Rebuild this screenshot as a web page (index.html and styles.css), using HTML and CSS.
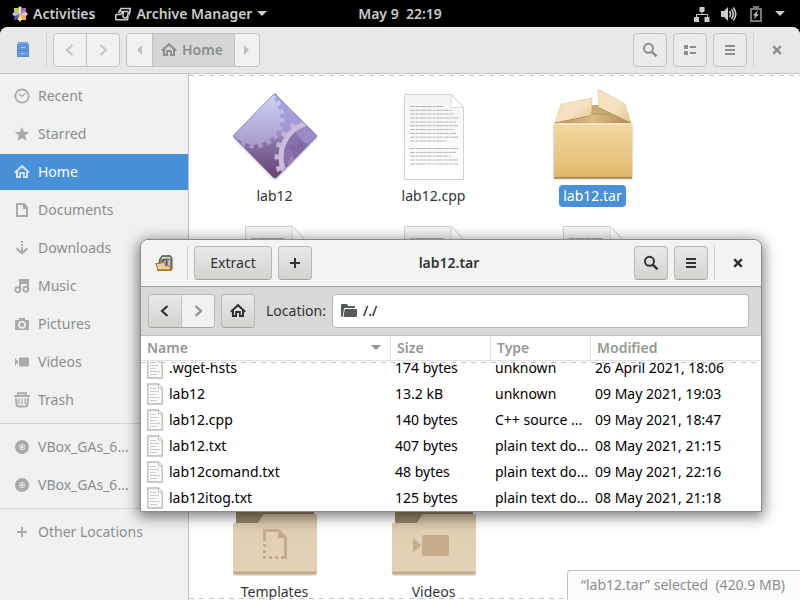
FILE: index.html
```
<!DOCTYPE html>
<html lang="en">
<head>
<meta charset="utf-8">
<title>Archive Manager</title>
<link rel="stylesheet" href="styles.css">
</head>
<body>
<svg class="defs" aria-hidden="true">
  <defs>
    <linearGradient id="gDiamond" x1="0" y1="0" x2="0" y2="1"><stop offset="0" stop-color="#c4c8f6"/><stop offset=".45" stop-color="#a294ca"/><stop offset=".6" stop-color="#846fa2"/><stop offset="1" stop-color="#673d68"/></linearGradient>
    <linearGradient id="gGear" gradientUnits="userSpaceOnUse" x1="0" y1="0" x2="0" y2="58"><stop offset="0" stop-color="#d0d6fb"/><stop offset="1" stop-color="#a597c8"/></linearGradient>
    <linearGradient id="gBox" x1="0" y1="0" x2="0" y2="1"><stop offset="0" stop-color="#f3d8a2"/><stop offset=".8" stop-color="#e5c079"/><stop offset="1" stop-color="#deb365"/></linearGradient>
    <linearGradient id="gFlap" x1="0" y1="0" x2="1" y2="1"><stop offset="0" stop-color="#f2dfbd"/><stop offset=".5" stop-color="#f5e2c3"/><stop offset="1" stop-color="#e5c68d"/></linearGradient>
    <linearGradient id="gInside" x1="0" y1="0" x2="1" y2="0"><stop offset="0" stop-color="#b09462"/><stop offset=".5" stop-color="#d9bc83"/><stop offset="1" stop-color="#a88a55"/></linearGradient>
    <linearGradient id="gFolder" x1="0" y1="0" x2="0" y2="1"><stop offset="0" stop-color="#d6c2a6"/><stop offset=".3" stop-color="#e1cfb3"/><stop offset="1" stop-color="#e4d2b8"/></linearGradient>
    <linearGradient id="gPaper" x1="0" y1="0" x2="0" y2="1"><stop offset="0" stop-color="#f4f4f3"/><stop offset="1" stop-color="#ffffff"/></linearGradient>
    <filter id="soft" x="-10%" y="-10%" width="120%" height="120%"><feDropShadow dx="0" dy="1" stdDeviation="1" flood-opacity=".35"/></filter>
    <clipPath id="diamondClip"><path d="M43 3 84 44Q85 45 84 46L45 86Q43 88 41 86L2 46Q1 45 2 44L41 4Q43 2 45 4Z"/></clipPath>
  </defs>
  <symbol id="home" viewBox="0 0 16 16"><path fill="none" stroke="currentColor" stroke-width="2" d="M.8 8.700 8 2.200l7.200 6.500"/><path fill="currentColor" d="M2 8v6h5v-4h2v4h5V8l-2-1.700V12h-1.200V8H5.200v4H4V6.300z"/></symbol>
  <symbol id="back" viewBox="0 0 16 16"><path fill="none" stroke="currentColor" stroke-width="2.200" d="M10.500 3 5 8l5.500 5"/></symbol>
  <symbol id="fwd" viewBox="0 0 16 16"><path fill="none" stroke="currentColor" stroke-width="2.200" d="M5.500 3 11 8l-5.500 5"/></symbol>
  <symbol id="search" viewBox="0 0 16 16"><circle cx="6.500" cy="6.300" r="4.500" fill="none" stroke="currentColor" stroke-width="2"/><path stroke="currentColor" stroke-width="2.400" d="m9.800 9.600 4.700 4.700"/></symbol>
  <symbol id="menu" viewBox="0 0 16 16"><path fill="currentColor" d="M3 3h10v2H3zM3 7h10v2H3zM3 11h10v2H3z"/></symbol>
  <symbol id="views" viewBox="0 0 16 16"><path fill="currentColor" d="M2 3h4v4H2zM8 4h6v2H8zM2 9h4v4H2zM8 10h6v2H8z"/></symbol>
  <symbol id="close" viewBox="0 0 16 16"><path stroke="currentColor" stroke-width="2.400" d="m4.200 4.200 7.600 7.600M11.800 4.200l-7.600 7.600"/></symbol>
  <symbol id="plus" viewBox="0 0 16 16"><path fill="currentColor" d="M7 3h2v4h4v2H9v4H7V9H3V7h4z"/></symbol>
  <symbol id="down" viewBox="0 0 10 6"><path fill="currentColor" d="M0 0h10L5 5z"/></symbol>
  <symbol id="recent" viewBox="0 0 16 16"><circle cx="8" cy="8" r="6.700" fill="none" stroke="currentColor" stroke-width="1.800"/><path fill="none" stroke="currentColor" stroke-width="1.200" d="m4.800 5.800 3 2.700L11.800 5"/></symbol>
  <symbol id="star" viewBox="0 0 16 16"><path fill="currentColor" d="m8 1 2 4.800 5.200.4-4 3.400 1.300 5.200L8 12l-4.500 2.800 1.300-5.200-4-3.400L6 5.800z"/></symbol>
  <symbol id="doc" viewBox="0 0 16 16"><path fill="none" stroke="currentColor" stroke-width="2" d="M3 2h7l3 3.500V14H3z"/><path fill="currentColor" d="M9 2v5h5V5l-4-4z"/></symbol>
  <symbol id="download" viewBox="0 0 16 16"><path fill="currentColor" d="M7 1h2v2H7zM7 4h2v2H7zM7 7h2v5H7z"/><path fill="none" stroke="currentColor" stroke-width="2.200" d="m2.500 8.300 5.500 5 5.500-5"/></symbol>
  <symbol id="music" viewBox="0 0 16 16"><path fill="currentColor" d="M5 1h10v11h-2V6H7v7H5z"/><circle cx="3.800" cy="11.800" r="2.500" fill="none" stroke="currentColor" stroke-width="1.900"/><circle cx="11.800" cy="11.300" r="2.500" fill="none" stroke="currentColor" stroke-width="1.900"/></symbol>
  <symbol id="camera" viewBox="0 0 16 16"><path fill="currentColor" fill-rule="evenodd" d="M5 2h6v2h3q1 0 1 1v8q0 1-1 1H2q-1 0-1-1V5q0-1 1-1h3zM8 4.800a4 4 0 1 0 .01 0zM8 6.500a2.300 2.300 0 1 1-.01 0z"/></symbol>
  <symbol id="video" viewBox="0 0 16 16"><path fill="currentColor" d="M1 4l3.500 4L1 12zM6 3.500h8q1 0 1 1v7q0 1-1 1H6q-1 0-1-1v-7q0-1 1-1z"/></symbol>
  <symbol id="trash" viewBox="0 0 16 16"><path fill="none" stroke="currentColor" stroke-width="2" d="M4 3V1.200h8V3M0 4h16M2 6l.7 7q.2 1.500 1.500 1.500h7.600q1.300 0 1.500-1.500L14 6"/><path fill="none" stroke="currentColor" stroke-width="1.300" d="M5 6.300q-.7 3 .2 6M8 6.300v6M11 6.300q.7 3-.2 6"/></symbol>
  <symbol id="disc" viewBox="0 0 16 16"><circle cx="8" cy="8" r="5" fill="none" stroke="currentColor" stroke-width="4"/><circle cx="8" cy="8" r="2" fill="none" stroke="currentColor"/></symbol>
  <symbol id="paper" viewBox="0 0 60 86">
    <path filter="url(#soft)" fill="url(#gPaper)" stroke="#d2d2d0" d="M.5.500h46.500l12.500 13v72H.5z"/>
    <path fill="#fff" stroke="#d0d0ce" stroke-width=".7" d="M47 .5v13h12.500z"/>
    <path stroke="#888" stroke-width="1" stroke-dasharray="5 .7 3 .5 7 .6" opacity=".6" d="M6 12.500h34M6 16.300h42M6 20h44M6 24h48M6 28h46M6 31.800h48M6 35.600h44M6 39.400h46M6 43.200h48M6 47h36M6 54.500h48M6 58.400h46M6 62.200h41M6 66h48M6 70h48"/>
  </symbol>
  <symbol id="rowdoc" viewBox="0 0 16 22"><path fill="#fafaf9" stroke="#b9bab5" stroke-width="1.300" d="M.8 1h10.700L15.200 5v16H.8z"/><path fill="#fff" stroke="#b9bab5" d="M11.500 1v4h3.700"/><path stroke="#cbccc9" d="M3 5.500h6M3 8.500h9M3 11.500h6M3 14.500h10M3 17.500h7"/></symbol>
  <symbol id="folder" viewBox="0 0 84 66">
    <path fill="#98886a" d="M3 0h78v14H3z"/>
    <path filter="url(#soft)" fill="url(#gFolder)" d="M0 15q0-2 2-2h23l5-8q1-1 2-1h50q2 0 2 2v56q0 2-2 2H2q-2 0-2-2z"/>
    <path fill="#c6a881" d="M0 61.500h84q0 2.500-2 2.500H2q-2 0-2-2.500z"/>
  </symbol>
</svg>

<header class="topbar">
  <button class="top-item">
    <svg class="i16" viewBox="0 0 16 16"><path fill="#dfe7a5" d="m8 0 2.500 2.500v3L8 8 5.500 5.500v-3z"/><path fill="#a9cf55" d="M2 2h5v5H2z"/><path fill="#a45bab" d="M9 2h5v5H9z"/><path fill="#3d3b88" d="M2 9h5v5H2z"/><path fill="#e9a63a" d="M9 9h5v5H9z"/><path fill="#eedb88" d="m8 16-2.500-3L8 8l2.500 5z"/><path fill="#c9a2d4" d="m0 8 2.500-2.500L8 8l-5.500 2.500z"/><path fill="#d8b9dd" d="m16 8-2.500-2.500L8 8l5.500 2.500z"/><path stroke="#fff" stroke-width=".4" d="M8 1v14M1 8h14M3 3l10 10M13 3 3 13"/></svg>
    Activities
  </button>
  <button class="top-item app">
    <svg class="i16" viewBox="0 0 16 16"><path fill="none" stroke="currentColor" stroke-width="1.600" d="M3.500 7 6 2.500h9.500L14 9M1 8.500h4.500L7 7h2M.8 8.500V13q0 .8.800.8H13M4.500 5.500h9"/><path fill="none" stroke="currentColor" stroke-width="1.500" d="M8.500 5.500 8 9.500q0 2.500 2 2.500t2.500-2L13.500 6M13 9.500l-.3 4.300"/></svg>
    Archive Manager
    <svg class="arrow" viewBox="0 0 10 6"><use href="#down"/></svg>
  </button>
  <time class="clock">May 9&nbsp; 22:19</time>
  <button class="top-item tray" aria-label="System">
    <svg class="i16" viewBox="0 0 16 16"><path fill="currentColor" d="M5.500 1h5v5h-5zM0 11h5v5H0zM10.500 11h5v5h-5z"/><path fill="none" stroke="currentColor" d="M8 5v3.500M2.500 11V8.500h11V11"/></svg>
    <svg class="i16" viewBox="0 0 16 16"><path fill="currentColor" d="M0 5h3l4-4v14l-4-4H0z"/><path fill="none" stroke="currentColor" stroke-width="1.600" d="M8.500 5q2 3 0 6M10.500 3.200q3.500 4.800 0 9.600M12.300 1.500q5 6.500 0 13"/></svg>
    <svg class="i16" viewBox="0 0 16 16"><path fill="none" stroke="#777" stroke-width="2" d="M3 3h10v12H3z"/><path fill="#777" d="M5 0h6v3H5z"/><path fill="currentColor" d="M10 4 5 9.500h2.500L5.500 13.500 11 8.200H8.500z"/></svg>
    <svg class="arrow" viewBox="0 0 10 6"><use href="#down"/></svg>
  </button>
</header>

<main class="files">
  <header class="files-bar">
    <svg class="cabinet" viewBox="0 0 12 16"><path fill="#5b8fd4" d="M1 1h10l1 2v12H0V3z"/><path fill="#77a8e4" d="M1 0h10v2H1z"/><path fill="#6199dd" d="M1 3h10v5H1zM1 9h10v5H1z"/><path fill="#a8cbf2" d="M4 5h4v1H4zM4 11h4v1H4z"/><path fill="#4a80c6" d="M0 8h12v1H0z"/></svg>
    <span class="divider"></span>
    <div class="group nav">
      <button aria-label="Back"><svg class="i16"><use href="#back"/></svg></button>
      <button aria-label="Forward"><svg class="i16"><use href="#fwd"/></svg></button>
    </div>
    <div class="group path">
      <button aria-label="Scroll left"><svg class="tri" viewBox="0 0 5 10"><path fill="currentColor" d="M5 0v10L0 5z"/></svg></button>
      <button class="crumb"><svg class="i16"><use href="#home"/></svg>Home</button>
      <button aria-label="Scroll right"><svg class="tri" viewBox="0 0 5 10"><path fill="currentColor" d="M0 0v10l5-5z"/></svg></button>
    </div>
    <span class="grow"></span>
    <button class="btn" aria-label="Search"><svg class="i16"><use href="#search"/></svg></button>
    <button class="btn" aria-label="View"><svg class="i16"><use href="#views"/></svg></button>
    <button class="btn" aria-label="Menu"><svg class="i16"><use href="#menu"/></svg></button>
    <span class="divider"></span>
    <button class="close" aria-label="Close"><svg class="i16"><use href="#close"/></svg></button>
  </header>

  <div class="files-body">
    <nav class="places">
      <a href="#"><svg class="i16"><use href="#recent"/></svg>Recent</a>
      <a href="#"><svg class="i16"><use href="#star"/></svg>Starred</a>
      <a href="#" class="current"><svg class="i16"><use href="#home"/></svg>Home</a>
      <a href="#"><svg class="i16"><use href="#doc"/></svg>Documents</a>
      <a href="#"><svg class="i16"><use href="#download"/></svg>Downloads</a>
      <a href="#"><svg class="i16"><use href="#music"/></svg>Music</a>
      <a href="#"><svg class="i16"><use href="#camera"/></svg>Pictures</a>
      <a href="#"><svg class="i16"><use href="#video"/></svg>Videos</a>
      <a href="#"><svg class="i16"><use href="#trash"/></svg>Trash</a>
      <hr>
      <a href="#"><svg class="i16"><use href="#disc"/></svg>VBox_GAs_6...</a>
      <a href="#"><svg class="i16"><use href="#disc"/></svg>VBox_GAs_6...</a>
      <hr>
      <a href="#"><svg class="i16"><use href="#plus"/></svg>Other Locations</a>
    </nav>

    <section class="icons">
      <figure>
        <svg class="pic exec" viewBox="0 0 86 90">
          <g filter="url(#soft)"><g clip-path="url(#diamondClip)">
            <path fill="url(#gDiamond)" d="M0 0h86v90H0z"/>
            <path fill="#a09adb" opacity=".8" d="M43 3 86 45 66 36 55 42 46 30z"/>
            <circle cx="22" cy="27" r="28" fill="none" stroke="url(#gGear)" stroke-width="5" stroke-dasharray="4.400 4.400"/>
            <circle cx="22" cy="27" r="26.500" fill="url(#gGear)"/>
            <circle cx="84" cy="66" r="33" fill="#8972ab"/>
            <path fill="#9b8aca" d="M63 40q10-8 23-6v22q-16-2-23-16z"/>
            <path fill="#a17fb4" d="M56 88q-2-14 2-22l8-2 6-5 14-2v31z"/>
            <path fill="#8168a4" d="m56 54 9 1 3-8 5 8 8 2-7 4-1 7-6-3-5 4-1-8z"/>
            <circle cx="84" cy="66" r="35" fill="none" stroke="#cdbddd" stroke-width="5"/>
            <circle cx="84" cy="66" r="39" fill="none" stroke="#c6b3d8" stroke-width="5" stroke-dasharray="5 7"/>
          </g></g>
          <path fill="none" stroke="#6f5f95" stroke-width=".8" opacity=".7" d="M43 3 84 44Q85 45 84 46L45 86Q43 88 41 86L2 46Q1 45 2 44L41 4Q43 2 45 4Z"/>
        </svg>
        <figcaption>lab12</figcaption>
      </figure>
      <figure>
        <svg class="pic paper"><use href="#paper"/></svg>
        <figcaption>lab12.cpp</figcaption>
      </figure>
      <figure class="selected">
        <svg class="pic box" viewBox="0 0 80 92">
          <path fill="url(#gInside)" d="M8 17h63l7 20H2z"/>
          <path fill="#c7a973" d="M37 17h14l6 9H37z"/>
          <path stroke="#b3945d" d="M36 26h22"/>
          <path filter="url(#soft)" fill="url(#gBox)" d="M1 35h78v54q0 1-1 1H2q-1 0-1-1z"/>
          <path fill="#f8e5bf" d="M1 35h78v2H1z"/>
          <path fill="#a98448" d="M1 89h78v1.500H1z"/>
          <path fill="url(#gFlap)" stroke="#e0c796" stroke-width=".6" d="M8 16 39 10l-1 18L2 35z"/>
          <path fill="none" stroke="#b79052" d="m2 35 35-7 1-1"/>
          <path fill="url(#gFlap)" stroke="#e0c796" stroke-width=".6" d="m45 1 27 15 6 19-32-15z"/>
          <path fill="none" stroke="#b79052" d="m46 20 32 15"/>
        </svg>
        <figcaption>lab12.tar</figcaption>
      </figure>
      <figure><svg class="pic paper"><use href="#paper"/></svg></figure>
      <figure><svg class="pic paper"><use href="#paper"/></svg></figure>
      <figure><svg class="pic paper"><use href="#paper"/></svg></figure>
      <figure class="last-row">
        <svg class="pic folder" viewBox="0 0 84 66"><use href="#folder" width="84" height="66"/><path fill="#c5ad8b" d="M30 19h16l8 8v22h-6v-3h3V28h-6v-6H33v9h-3zM30 34h3v3h-3zM30 40h3v3h-3zM30 46h3v3h-3zM36 46h3v3h-3zM42 46h3v3h-3z"/></svg>
        <figcaption>Templates</figcaption>
      </figure>
      <figure class="last-row">
        <svg class="pic folder" viewBox="0 0 84 66"><use href="#folder" width="84" height="66"/><path fill="#c5ad8b" d="m21 28 8 7.500-8 7.500zM32 25h23q2 0 2 2v17q0 2-2 2H32q-2 0-2-2V27q0-2 2-2z"/></svg>
        <figcaption>Videos</figcaption>
      </figure>
      <p class="status">“lab12.tar” selected&nbsp; (420.9 MB)</p>
    </section>
  </div>
</main>

<section class="archive" aria-label="lab12.tar">
  <header class="archive-bar">
    <svg class="roller" viewBox="0 0 18 16"><path fill="#8b8c84" stroke="#4c4d48" d="M5 3.500 7 .8h8.500L17 3v11H8L4 8z"/><path fill="none" stroke="#e4e4e0" stroke-width="1.300" d="M7 3h8M9.500 6v3.500M14 5v7"/><path fill="none" stroke="#4c4d48" d="M8 10.500V5q3.500-2 6 0M11.500 6v4"/><path fill="#e3d3a3" stroke="#a2762c" d="M.8 8.500h4.700L7 7.500h2.500l1 3.500h4l1.500 4H3z"/><path stroke="#b57411" stroke-width="1.500" d="M2 15.200h15"/></svg>
    <span class="divider"></span>
    <button class="btn extract">Extract</button>
    <button class="btn" aria-label="Add files"><svg class="i16"><use href="#plus"/></svg></button>
    <h1>lab12.tar</h1>
    <button class="btn" aria-label="Search"><svg class="i16"><use href="#search"/></svg></button>
    <button class="btn" aria-label="Menu"><svg class="i16"><use href="#menu"/></svg></button>
    <span class="divider"></span>
    <button class="close" aria-label="Close"><svg class="i16"><use href="#close"/></svg></button>
  </header>
  <div class="toolbar">
    <div class="group">
      <button aria-label="Back"><svg class="i16"><use href="#back"/></svg></button>
      <button aria-label="Forward" disabled><svg class="i16"><use href="#fwd"/></svg></button>
    </div>
    <button class="btn" aria-label="Home"><svg class="i16"><use href="#home"/></svg></button>
    <label for="location">Location:</label>
    <div class="entry">
      <svg class="i16" viewBox="0 0 16 16"><path fill="#555a5b" d="M0 2q0-1 1-1h5l1 2h6q1 0 1 1v1H4q-1 0-1 1L1.500 14Q0 14 0 13z"/><path fill="#555a5b" d="M4.500 6H15q1 0 1 1v6q0 1-1 1H2.500L3.600 7q.1-1 .9-1z"/></svg>
      <input id="location" type="text" value="/./">
    </div>
  </div>
  <table class="list">
    <thead>
      <tr><th>Name<svg class="arrow" viewBox="0 0 10 6"><use href="#down"/></svg></th><th>Size</th><th>Type</th><th>Modified</th></tr>
    </thead>
    <tbody>
      <tr><td><svg class="rowdoc"><use href="#rowdoc"/></svg>.wget-hsts</td><td>174 bytes</td><td>unknown</td><td>26 April 2021, 18:06</td></tr>
      <tr><td><svg class="rowdoc"><use href="#rowdoc"/></svg>lab12</td><td>13.2 kB</td><td>unknown</td><td>09 May 2021, 19:03</td></tr>
      <tr><td><svg class="rowdoc"><use href="#rowdoc"/></svg>lab12.cpp</td><td>140 bytes</td><td>C++ source ...</td><td>09 May 2021, 18:47</td></tr>
      <tr><td><svg class="rowdoc"><use href="#rowdoc"/></svg>lab12.txt</td><td>407 bytes</td><td>plain text do...</td><td>08 May 2021, 21:15</td></tr>
      <tr><td><svg class="rowdoc"><use href="#rowdoc"/></svg>lab12comand.txt</td><td>48 bytes</td><td>plain text do...</td><td>09 May 2021, 22:16</td></tr>
      <tr><td><svg class="rowdoc"><use href="#rowdoc"/></svg>lab12itog.txt</td><td>125 bytes</td><td>plain text do...</td><td>08 May 2021, 21:18</td></tr>
    </tbody>
  </table>
</section>
</body>
</html>
```
FILE: styles.css
```
* { box-sizing: border-box; }

body {
  margin: 0;
  height: 100vh;
  overflow: hidden;
  display: flex;
  flex-direction: column;
  background: #000;
  font: 14px/20px "Noto Sans", "Open Sans", sans-serif;
  color: #2e3436;
}

button, input {
  font: inherit;
  color: inherit;
  margin: 0;
  padding: 0;
  border: 0;
  background: none;
}

.defs { position: absolute; width: 0; height: 0; }
svg { flex: none; display: block; }
.i16 { width: 16px; height: 16px; }
.arrow { width: 10px; height: 6px; }
.grow { flex: 1; }

/* Top bar */
.topbar {
  flex: none;
  height: 27px;
  display: grid;
  grid-template-columns: auto auto 1fr auto;
  align-items: center;
  padding: 0 15px 0 12px;
  color: #ccc;
  font-weight: 600;
  position: relative;
}
.top-item { display: flex; align-items: center; gap: 5px; }
.app { margin-left: 20px; }
.tray { grid-column: 4; gap: 11px; }
.clock { position: absolute; left: 50%; transform: translateX(-50%); }

/* File browser */
.files {
  flex: 1;
  min-height: 0;
  display: flex;
  flex-direction: column;
  background: #fff;
  border-radius: 8px 8px 0 0;
  overflow: hidden;
}
.files-bar, .archive-bar { display: flex; align-items: center; gap: 6px; }
.files-bar {
  flex: none;
  height: 47px;
  padding: 0 15px 0 17px;
  background: #e8e8e7;
  border-bottom: 1px solid #c2c3c1;
  color: #8b8e8f;
}
.cabinet { width: 12px; height: 16px; margin-right: 11px; }
.divider { width: 1px; height: 34px; background: #d0d1cf; }

.btn, .close, .group button {
  height: 34px;
  min-width: 34px;
  display: flex;
  align-items: center;
  justify-content: center;
}
.close { min-width: 17px; margin-left: 8px; }
.btn, .group { border: 1px solid #c3c4c2; border-radius: 4px; }
.group { display: flex; height: 34px; overflow: hidden; }
.group button { height: 32px; width: 32px; min-width: 0; }
.group button + button { width: 33px; border-left: 1px solid #c3c4c2; }
.files-bar .group { background: #f1f1f1; }
.files-bar .btn { background: #ebebea; }
.nav button { color: #c5c7c6; }
.path button, .path button + button { width: 25px; color: #bcbebc; }
.path button + .crumb {
  width: auto;
  padding: 0 11px 0 8px;
  gap: 5px;
  background: #d6d6d5;
  color: #8b8e8f;
  font-weight: 600;
}
.tri { width: 5px; height: 10px; }

.files-body { flex: 1; min-height: 0; display: flex; }
.places {
  flex: none;
  width: 189px;
  padding-top: 4px;
  display: flex;
  flex-direction: column;
  gap: 2px;
  background: #f1f1f1;
  border-right: 1px solid #c2c3c1;
}
.places a {
  height: 36px;
  padding-left: 14px;
  display: flex;
  align-items: center;
  gap: 8px;
  color: #8b8e8f;
  text-decoration: none;
}
.places svg { color: #a9abaa; }
.places .current { background: #4a90d9; color: #fff; }
.places .current svg { color: #d3e3f6; }
.places hr { width: 100%; height: 1px; margin: 3px 0; border: 0; background: #d6d6d5; }

.icons {
  flex: 1;
  position: relative;
  display: grid;
  grid-template-columns: repeat(auto-fill, 159px);
  grid-auto-rows: 132px;
  padding: 3px 0 0 6px;
  overflow: hidden;
}
.icons::before, .icons::after, .list tbody::before {
  content: "";
  position: absolute;
  left: 0;
  right: 0;
  height: 1px;
  background: repeating-linear-gradient(90deg, #c4c6c4 0 5px, transparent 5px 10px);
}
.icons::before { top: 1px; }
.icons::after { bottom: 1px; }

figure {
  margin: 0;
  display: grid;
  grid-template-rows: 108px 22px;
  justify-items: center;
  align-items: end;
}
.pic { overflow: visible; }
.exec { width: 86px; height: 90px; margin-bottom: 4px; }
.paper { width: 60px; height: 86px; margin-bottom: 5px; }
.box { width: 80px; height: 92px; margin-bottom: 5px; }
.folder { width: 84px; height: 66px; margin-bottom: 5px; }
.last-row { grid-row: 4; }
figcaption { padding: 1px 4px; border-radius: 4px; }
.selected figcaption { background: #4a90d9; color: #fff; }

.status {
  position: absolute;
  right: 0;
  bottom: 0;
  z-index: 1;
  margin: 0;
  height: 30px;
  padding: 4px 15px 4px 13px;
  background: #fbfbfb;
  border: 1px solid #c2c3c1;
  border-width: 1px 0 0 1px;
  border-radius: 4px 0 0 0;
  color: #8b8e8f;
}

/* Archive window, floating on the desktop */
.archive {
  position: absolute;
  left: 140px;
  right: 38px;
  top: 239px;
  border: 1px solid #8b8c89;
  border-radius: 8px 8px 0 0;
  background: #fff;
  overflow: hidden;
  box-shadow: 0 3px 14px 2px rgba(0, 0, 0, .5);
}
.archive-bar {
  height: 47px;
  padding: 0 15px 0 14px;
  background: #f3f3f3;
  border-bottom: 1px solid #a1a29f;
}
.roller { width: 18px; height: 16px; margin-right: 8px; }
.archive h1 { flex: 1; margin: 0; padding-right: 48px; text-align: center; font: inherit; font-weight: 600; }
.archive .btn, .archive .group { border-color: #b8b9b5; border-bottom-color: #a4a5a2; }
.archive .btn, .archive .group button { background: linear-gradient(#e9e9e8, #d3d3d0); }
.archive .group button:disabled { background: #f1f1f1; color: #8b8e8f; }
.archive .extract { width: 78px; }
.toolbar {
  height: 49px;
  display: flex;
  align-items: center;
  gap: 6px;
  padding: 0 12px 0 7px;
  background: #d8d8d6;
  border-bottom: 1px solid #bdbebb;
}
.toolbar label { margin-left: 5px; }
.entry {
  flex: 1;
  height: 34px;
  display: flex;
  align-items: center;
  gap: 6px;
  padding: 0 8px;
  background: #fff;
  border: 1px solid #b8b9b5;
  border-radius: 4px;
}
.entry input { flex: 1; min-width: 0; outline: 0; color: #000; }

.list { display: block; color: #000; }
.list thead, .list tbody { display: block; position: relative; }
.list tr {
  display: grid;
  grid-template-columns: 250px 100px 100px 1fr;
  height: 26px;
  align-items: center;
}
.list thead tr { height: 25px; align-items: stretch; border-bottom: 1px solid #e1e1e0; }
.list tbody tr:first-child { height: 20px; align-content: end; overflow: hidden; }
.list tbody::before { top: 1px; }
.list th {
  display: flex;
  align-items: center;
  justify-content: space-between;
  padding: 0 9px 0 6px;
  color: #949796;
  font-weight: 600;
  border-right: 1px solid #e1e1e0;
}
.list th:last-child { border-right: 0; }
.list td {
  display: flex;
  align-items: center;
  gap: 6px;
  height: 26px;
  padding: 0 4px;
  white-space: nowrap;
}
.list td:first-child { padding-left: 6px; }
.rowdoc { width: 16px; height: 22px; }
```
